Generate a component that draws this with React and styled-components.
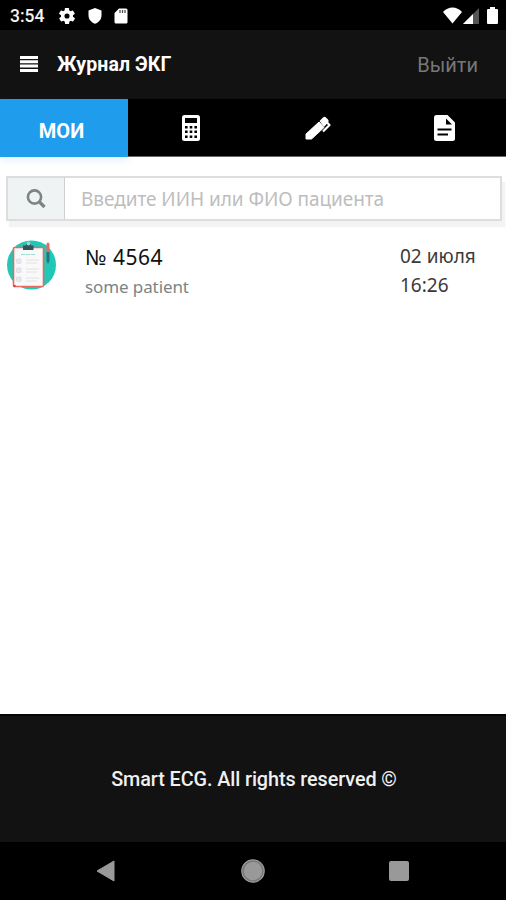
import React from "react";
import styled, { createGlobalStyle } from "styled-components";

const GlobalStyle = createGlobalStyle`
  * {
    box-sizing: border-box;
  }
  body {
    margin: 0;
    background-color: white;
    font-family: Roboto, "Noto Sans", sans-serif;
  }
`;

const Screen = styled.div`
  display: flex;
  flex-direction: column;
  width: 100%;
  height: 100vh;
  overflow: hidden;
`;

const StatusBar = styled.div`
  display: flex;
  align-items: center;
  flex: none;
  height: 30px;
  padding: 1px 8px 0 10px;
  background-color: black;
`;

const Clock = styled.span`
  width: 49px;
  color: #f4f4f4;
  font-size: 17.5px;
  font-weight: 500;
  line-height: 20px;
`;

const StatusIcons = styled.div`
  display: flex;
  align-items: center;
  gap: ${(props) => props.$gap};
  margin-left: ${(props) => (props.$end ? "auto" : "0")};
`;

const Header = styled.header`
  display: flex;
  align-items: center;
  flex: none;
  height: 69px;
  padding: 0 28px 0 20px;
  background-color: #121212;
`;

const Title = styled.h1`
  margin: 0 auto 0 19px;
  color: white;
  font-size: 19.5px;
  font-weight: 700;
  line-height: 24px;
  letter-spacing: 0.1px;
`;

const Logout = styled.a`
  padding-top: 1px;
  color: #777;
  font-size: 20px;
  line-height: 24px;
`;

const Tabs = styled.nav`
  display: grid;
  grid-template-columns: 128px 125px 128px 125px;
  flex: none;
  height: 58px;
  background-color: black;
  border-bottom: 1px solid #666;
`;

const Tab = styled.div`
  display: flex;
  align-items: center;
  justify-content: center;
  padding: ${(props) => (props.$active ? "6px 5px 0 0" : "1px 0 0 1px")};
  margin-bottom: ${(props) => (props.$active ? "-1px" : "0")};
  color: white;
  font-size: 20px;
  font-weight: 700;
  background-color: ${(props) => (props.$active ? "#209cec" : "black")};
  box-shadow: ${(props) => (props.$active ? "0 3px 8px rgba(32, 156, 236, 0.14)" : "none")};
`;

const Content = styled.main`
  flex: 1;
  padding: 19px 4px 0 6px;
`;

const Search = styled.div`
  display: flex;
  height: 45px;
  border: 2px solid #dcdede;
  box-shadow: 3px 6px 1px #f3f3f3;
  background-color: white;
`;

const SearchButton = styled.div`
  display: flex;
  align-items: center;
  justify-content: center;
  width: 57px;
  padding-right: 1px;
  border-right: 1px solid #ccd0d0;
  background-color: #f0f3f3;
`;

const Placeholder = styled.span`
  padding-left: 16px;
  color: #bdbdbd;
  font-family: "Noto Sans", sans-serif;
  font-size: 19px;
  line-height: 43px;
  letter-spacing: -0.05px;
  white-space: nowrap;
`;

const Row = styled.div`
  display: flex;
  align-items: flex-start;
  padding: 19px 0 0 1px;
  font-family: "Noto Sans", sans-serif;
`;

const Info = styled.div`
  width: 315px;
  padding: 3px 0 0 29px;
`;

const Number = styled.div`
  color: #111;
  font-size: 21px;
  line-height: 29px;
  letter-spacing: 0.5px;
`;

const Patient = styled.div`
  color: #7b8585;
  font-size: 17px;
  line-height: 29px;
  letter-spacing: -0.1px;
`;

const DateTime = styled.div`
  padding: 2px 0 0 29px;
  color: #3a3a3a;
  font-size: 19px;
  line-height: 29px;
  white-space: nowrap;
`;

const Footer = styled.footer`
  display: flex;
  align-items: center;
  justify-content: center;
  flex: none;
  height: 128px;
  padding: 1px 0 0 2px;
  color: #f0f0f0;
  font-size: 19.8px;
  font-weight: 500;
  letter-spacing: -0.08px;
  background-color: #121212;
  border-top: 2px solid #050505;
`;

const NavBar = styled.div`
  display: flex;
  align-items: center;
  justify-content: space-between;
  flex: none;
  height: 58px;
  padding: 0 97px 0 96px;
  background-color: black;
`;

const GearIcon = () => (
  <svg width="16" height="16" viewBox="2 2 20 20" fill="white">
    <path d="M19.4 13c0-.3.1-.6.1-1s0-.7-.1-1l2.1-1.6c.2-.2.3-.4.1-.7l-2-3.4c-.1-.3-.4-.3-.6-.3l-2.5 1c-.5-.4-1.1-.7-1.7-1l-.4-2.6c0-.3-.2-.4-.5-.4h-4c-.2 0-.4.2-.5.4l-.4 2.600c-.6.3-1.2.6-1.7 1l-2.5-1c-.2-.1-.5 0-.6.3l-2 3.400c-.1.2-.1.5.1.7L4.600 11c0 .3-.1.7-.1 1s0 .7.1 1l-2.100 1.600c-.2.2-.3.4-.1.7l2 3.400c.1.3.4.3.6.3l2.500-1c.5.4 1.1.7 1.7 1l.4 2.600c0 .3.2.4.5.4h4c.3 0 .5-.2.5-.4l.4-2.600c.6-.3 1.2-.6 1.7-1l2.500 1c.2.1.5 0 .6-.3l2-3.400c.1-.2.1-.5-.1-.7L19.400 13zM12 15.200A3.200 3.200 0 1 1 12 8.800a3.200 3.200 0 0 1 0 6.400z" />
  </svg>
);

const ShieldIcon = () => (
  <svg width="14" height="16" viewBox="0 0 14 16" fill="white">
    <path d="M7 0l6.500 2.600v5c0 3.700-2.700 7.100-6.500 8.200C3.200 14.700.5 11.300.5 7.600v-5z" />
  </svg>
);

const SdCardIcon = () => (
  <svg width="14" height="16" viewBox="0 0 14 16">
    <path d="M5 .5h7A1.500 1.500 0 0 1 13.500 2v12a1.500 1.500 0 0 1-1.500 1.500H2A1.500 1.500 0 0 1 .5 14V5z" fill="white" />
    <path d="M6 2v3M8.500 2v3M11 2v3" stroke="#555" strokeWidth="1.300" />
  </svg>
);

const WifiIcon = () => (
  <svg width="19" height="17" viewBox="0 0 19 17" fill="white">
    <path d="M9.500 16.500L0 5C5.200-1 13.800-1 19 5z" />
  </svg>
);

const SignalIcon = () => (
  <svg width="16" height="16" viewBox="0 0 16 16">
    <path d="M16 0v16H0z" fill="#555" />
    <path d="M10 6v10H0z" fill="white" />
  </svg>
);

const BatteryIcon = () => (
  <svg width="11" height="17" viewBox="0 0 11 17" fill="white">
    <path d="M3 0h5v2h2q1 0 1 1v13q0 1-1 1H1q-1 0-1-1V3q0-1 1-1h2z" />
  </svg>
);

const MenuIcon = () => (
  <svg width="18" height="17" viewBox="0 0 18 17" fill="white">
    <path d="M0 0h18v3H0zM0 4.300h18v3H0zM0 8.600h18v3H0zM0 13h18v3H0z" />
  </svg>
);

const CalculatorIcon = () => (
  <svg width="18" height="26" viewBox="0 0 18 26">
    <rect width="18" height="26" rx="2.500" fill="white" />
    <rect x="3" y="3" width="12" height="5" fill="black" />
    {[11, 15.5, 20.5].map((y) =>
      [3, 7.7, 12.4].map((x) => <rect key={`${x}-${y}`} x={x} y={y} width="2.6" height="2.500" fill="black" />)
    )}
  </svg>
);

const PenIcon = () => (
  <svg width="26" height="24" viewBox="0 0 26 24">
    <path d="M1 18L14 6l5 5.500L6.500 23H1z" fill="white" stroke="white" strokeLinejoin="round" />
    <path d="M14.500 5L18 1.500q1.500-1.500 3 0l2 2q1.500 1.500 0 3L19 11z" fill="white" />
    <path d="M22 6.500l2.500 2.500-6.500 6.500" fill="none" stroke="white" strokeWidth="2.200" strokeLinejoin="round" />
  </svg>
);

const DocumentIcon = () => (
  <svg width="21" height="26" viewBox="0 0 21 26">
    <path d="M2.500 0h11L21 7.500v16q0 2.500-2.500 2.500h-16Q0 26 0 23.500v-21Q0 0 2.500 0z" fill="white" />
    <path d="M12 3.500V9.500H18z" fill="black" />
    <path d="M3.500 14.500h14M3.500 19.500h10.500" stroke="black" strokeWidth="2" />
  </svg>
);

const SearchIcon = () => (
  <svg width="20" height="20" viewBox="0 0 20 20" fill="none" stroke="#7b8585">
    <circle cx="8.500" cy="8" r="6.600" strokeWidth="2.600" />
    <path d="M13 12.500l5.500 5.500" strokeWidth="3.200" />
  </svg>
);

const ClipboardIcon = () => (
  <svg width="49" height="50" viewBox="0 0 49 50">
    <circle cx="24.500" cy="25" r="24.500" fill="#20c8b8" />
    <rect x="6.500" y="7.500" width="30" height="39" rx="1" fill="#f9f9f9" stroke="#e9695f" strokeWidth="1.600" />
    <path d="M16 5.500h3q0-3 2.500-3t2.500 3h2.500V10H16z" fill="#34535a" />
    <circle cx="21.500" cy="3.500" r="2" fill="#93d8d2" />
    <path d="M14 14.500h15" stroke="#9addd1" strokeDasharray="4 1" />
    {[19, 28, 37].map((y) => (
      <g key={y} stroke="#dcdfe3" fill="#e6e9eb">
        <rect x="9.500" y={y} width="4.500" height="4.500" rx="1" />
        <path d={`M19 ${y + 1}h13M19 ${y + 4}h11`} stroke="#e2e2e4" />
      </g>
    ))}
    <path d="M39.500 4.500q0-2 1.500-2t1.500 2V12h-3z" fill="#e9695f" />
    <path d="M39.500 12h3v9L41 24l-1.500-3z" fill="#29747b" />
    <circle cx="7.500" cy="46" r="1.300" fill="#e43d4b" />
  </svg>
);

const BackIcon = () => (
  <svg width="19" height="22" viewBox="0 0 19 22">
    <path d="M1 11L18 1v20z" fill="#999" stroke="#999" strokeLinejoin="round" />
  </svg>
);

const HomeIcon = () => (
  <svg width="26" height="24" viewBox="-2 0 26 24">
    <circle cx="12" cy="12" r="11.200" fill="#777" stroke="#999" strokeWidth="1.200" />
    <circle cx="12" cy="12" r="9.200" fill="#999" />
  </svg>
);

const RecentIcon = () => (
  <svg width="20" height="20" viewBox="0 0 20 20">
    <rect width="20" height="20" rx="2" fill="#999" />
  </svg>
);

const App = () => {
  return (
    <Screen>
      <GlobalStyle />
      <StatusBar>
        <Clock>3:54</Clock>
        <StatusIcons $gap="12.5px">
          <GearIcon />
          <ShieldIcon />
          <SdCardIcon />
        </StatusIcons>
        <StatusIcons $gap="8px" $end>
          <StatusIcons $gap="1px">
            <WifiIcon />
            <SignalIcon />
          </StatusIcons>
          <BatteryIcon />
        </StatusIcons>
      </StatusBar>
      <Header>
        <MenuIcon />
        <Title>Журнал ЭКГ</Title>
        <Logout>Выйти</Logout>
      </Header>
      <Tabs>
        <Tab $active>МОИ</Tab>
        <Tab>
          <CalculatorIcon />
        </Tab>
        <Tab>
          <PenIcon />
        </Tab>
        <Tab>
          <DocumentIcon />
        </Tab>
      </Tabs>
      <Content>
        <Search>
          <SearchButton>
            <SearchIcon />
          </SearchButton>
          <Placeholder>Введите ИИН или ФИО пациента</Placeholder>
        </Search>
        <Row>
          <ClipboardIcon />
          <Info>
            <Number>№ 4564</Number>
            <Patient>some patient</Patient>
          </Info>
          <DateTime>
            02 июля
            <br />
            16:26
          </DateTime>
        </Row>
      </Content>
      <Footer>Smart ECG. All rights reserved ©</Footer>
      <NavBar>
        <BackIcon />
        <HomeIcon />
        <RecentIcon />
      </NavBar>
    </Screen>
  );
};

export default App;
